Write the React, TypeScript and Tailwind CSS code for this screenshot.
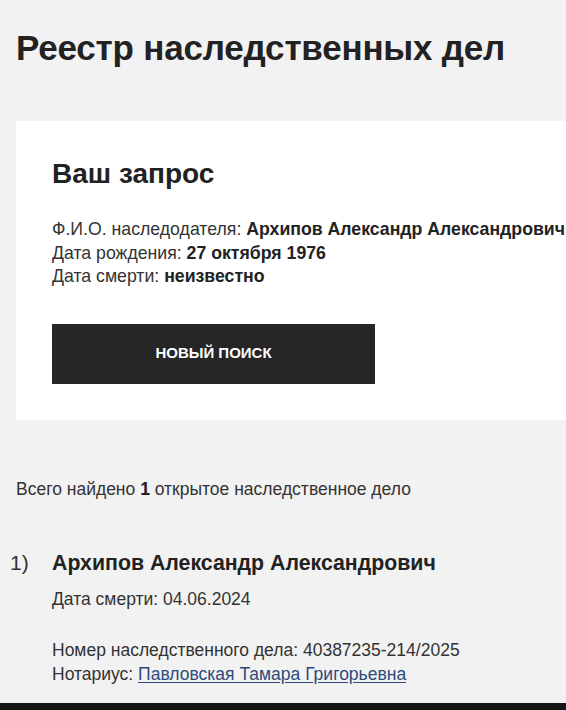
import React from 'react';

const FONT = { fontFamily: '"Liberation Sans", Arial, sans-serif' };

const query = [
  { label: 'Ф.И.О. наследодателя:', value: 'Архипов Александр Александрович' },
  { label: 'Дата рождения:', value: '27 октября 1976' },
  { label: 'Дата смерти:', value: 'неизвестно' },
];

export default function App() {
  return (
    <div className="min-h-screen bg-[#f2f2f2] text-[#222] flex flex-col overflow-hidden" style={FONT}>
      <main className="flex-1 pl-4">
        <h1 className="pt-[28px] text-[35px] leading-[40px] font-bold tracking-[-0.2px] text-[#222]">
          Реестр наследственных дел
        </h1>

        <section className="mt-[53px] bg-white pl-9 pt-9 pb-9">
          <h2 className="text-[28px] leading-[34px] font-bold text-[#222]">Ваш запрос</h2>
          <div className="mt-[27px] text-[17.7px] leading-[23.5px] text-[#333] whitespace-nowrap">
            {query.map((row) => (
              <p key={row.label}>
                {row.label} <strong className="font-bold text-[#222]">{row.value}</strong>
              </p>
            ))}
          </div>
          <button className="mt-[35px] w-[323px] h-[60px] bg-[#262626] text-white text-[15px] font-bold uppercase">
            Новый поиск
          </button>
        </section>

        <p className="mt-[57px] text-[17.5px] leading-6 text-[#333]">
          Всего найдено <strong className="font-bold text-[#222]">1</strong> открытое наследственное дело
        </p>

        <ol className="mt-[48px]">
          <li className="flex">
            <span className="w-[42px] shrink-0 -ml-[6px] text-[21px] leading-7 text-[#333]">1)</span>
            <div className="text-[17.5px] leading-6 text-[#333]">
              <h3 className="text-[21.3px] leading-7 font-bold text-[#222]">Архипов Александр Александрович</h3>
              <p className="mt-[10px]">Дата смерти: 04.06.2024</p>
              <p className="mt-[27px]">Номер наследственного дела: 40387235-214/2025</p>
              <p>
                Нотариус:{' '}
                <a href="#" className="text-[#2e4a7a] underline underline-offset-2">
                  Павловская Тамара Григорьевна
                </a>
              </p>
            </div>
          </li>
        </ol>
      </main>
      <footer className="h-[7px] bg-[#161616]" />
    </div>
  );
}
